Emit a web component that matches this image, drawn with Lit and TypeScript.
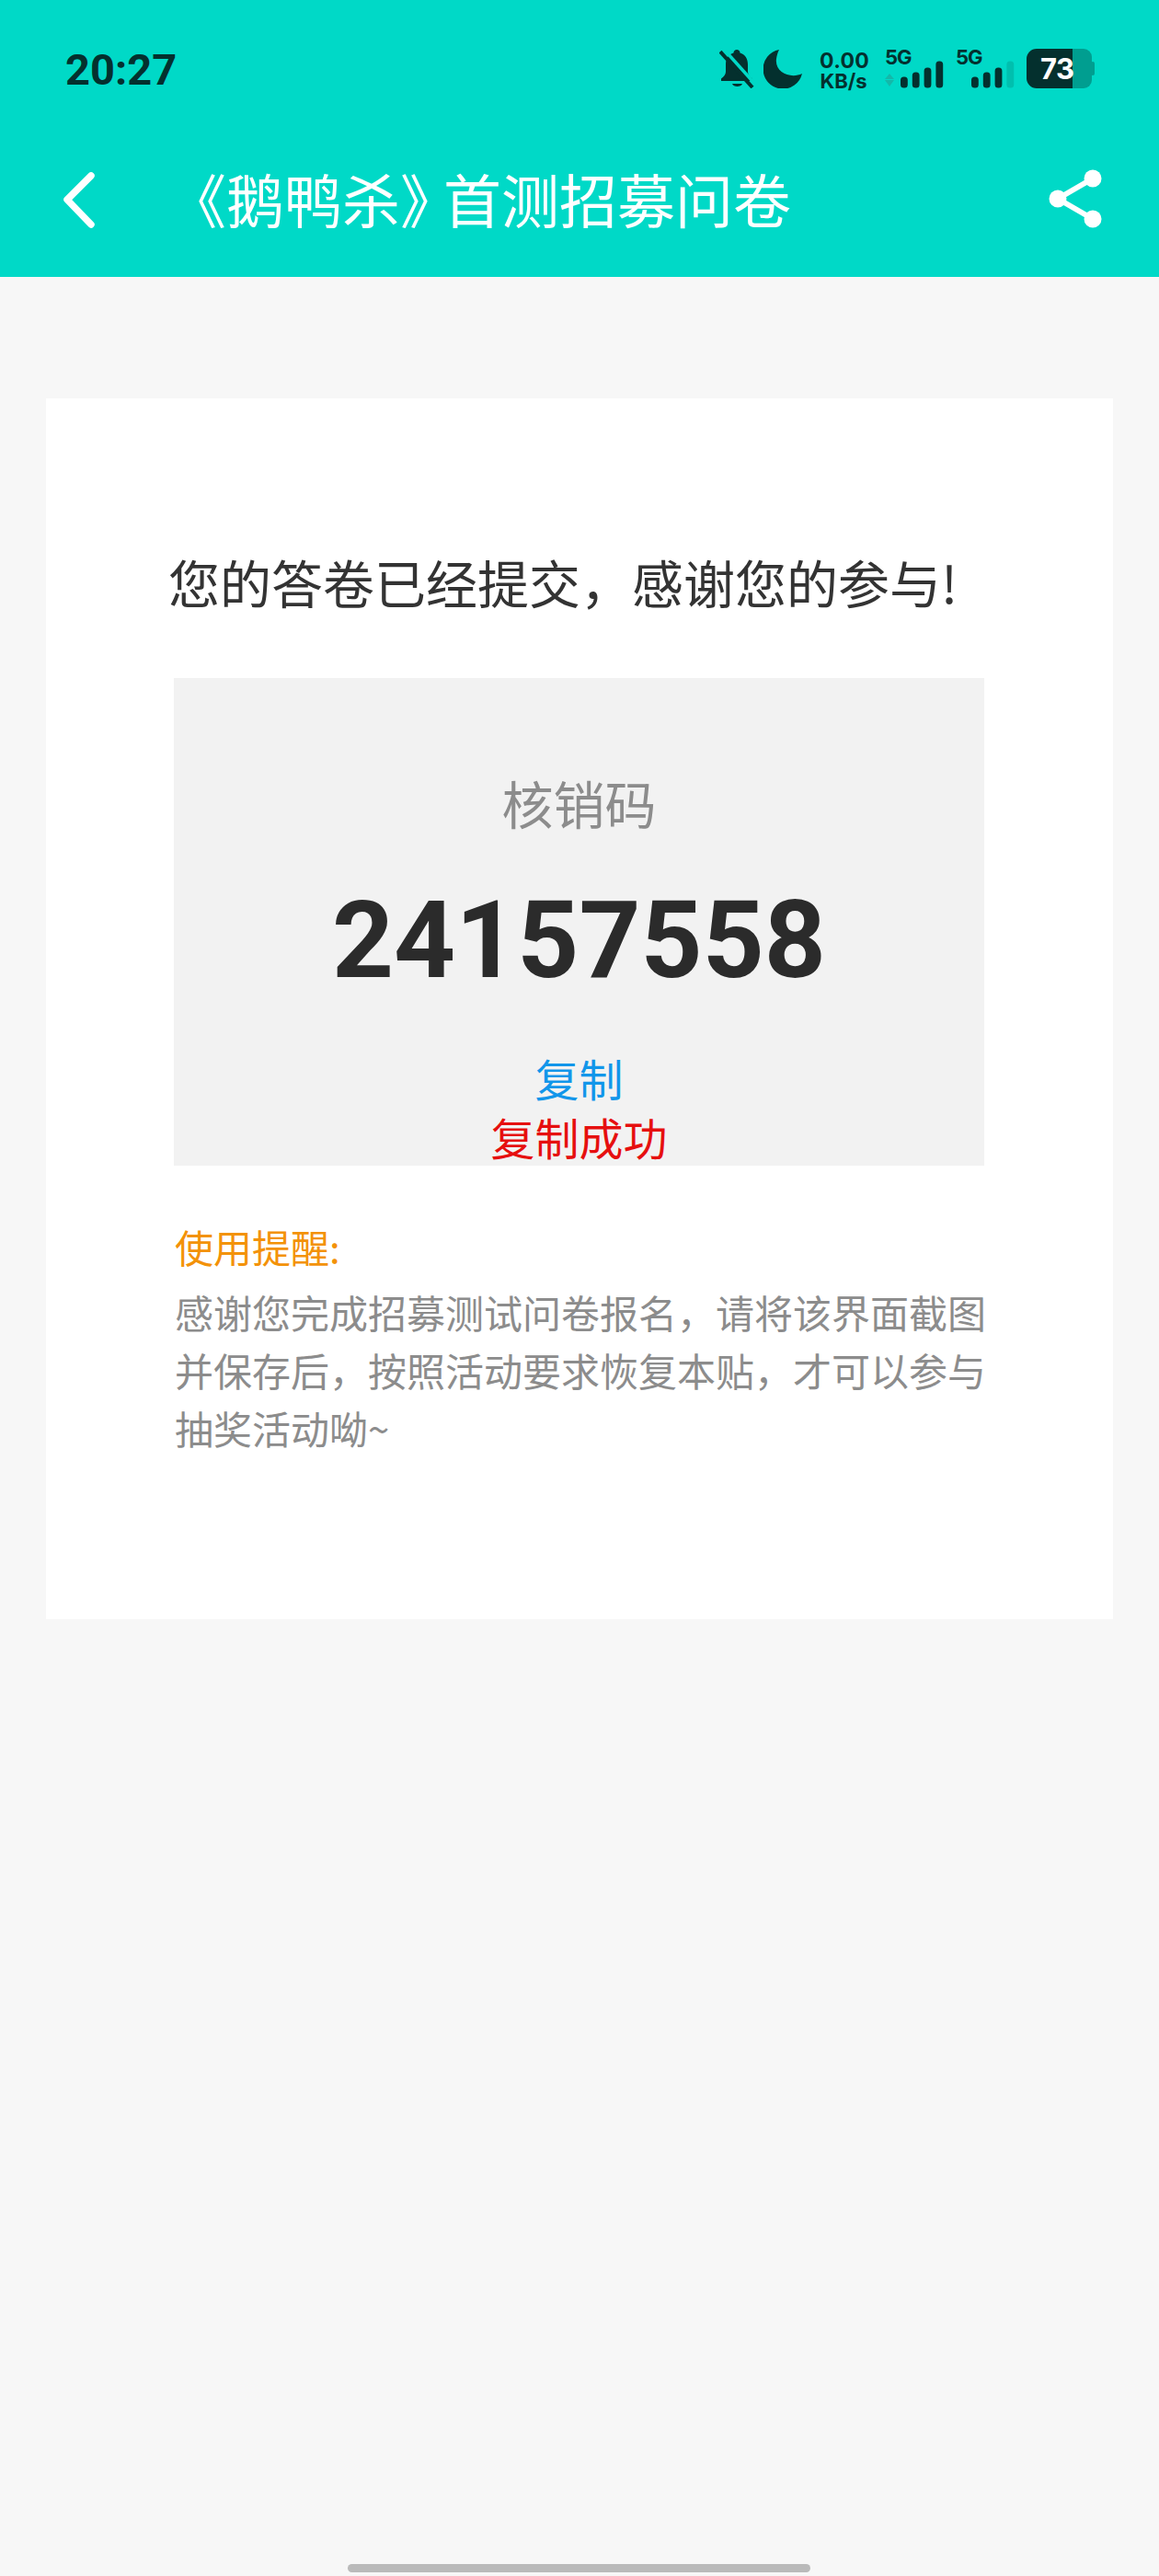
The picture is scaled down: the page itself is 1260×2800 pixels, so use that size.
import { LitElement, html, svg, css } from 'lit';
import { customElement } from 'lit/decorators.js';

const signal = (arrows: boolean) => html`
  <svg class="bars" width="70" height="30" viewBox="0 0 70 30">
    ${arrows ? svg`<path d="M5 14l5 6H0zM5 28l5-7H0z" fill="#14b8a9" />` : ''}
    ${[12, 17, 22, 29].map(
      (h, i) => svg`<rect
        x=${17 + i * 12.8}
        y=${29.5 - h}
        width="7.8"
        height=${h}
        rx="3.5"
        fill=${i === 3 && !arrows ? '#00bfae' : '#04302e'}
      />`
    )}
  </svg>
`;

@customElement('app-root')
export class AppRoot extends LitElement {
  static styles = css`
    :host {
      display: block;
      width: 1260px;
      height: 2800px;
      background: #f7f7f7;
      font-family: 'Noto Sans CJK SC', 'Noto Sans', sans-serif;
      position: relative;
      overflow: hidden;
    }
    .header {
      height: 301px;
      background: #00d9c7;
      box-sizing: border-box;
    }
    .status {
      height: 150px;
      display: flex;
      align-items: flex-start;
      justify-content: space-between;
      padding: 53px 70px 0 71px;
      box-sizing: border-box;
      color: #04302e;
    }
    .time {
      font-family: Roboto, sans-serif;
      font-weight: 700;
      font-size: 47px;
      line-height: 44px;
      margin-top: 1px;
    }
    .icons {
      display: flex;
      align-items: flex-start;
    }
    .bell {
      margin-right: 9px;
    }
    .moon {
      margin-right: 19px;
    }
    .speed {
      width: 52px;
      margin-right: 19px;
      text-align: center;
      font-family: Inter, sans-serif;
      font-weight: 700;
    }
    .speed .num {
      font-size: 23px;
      line-height: 24px;
      margin-top: 1px;
      letter-spacing: 0.3px;
    }
    .speed .unit {
      font-size: 22px;
      line-height: 20px;
      white-space: nowrap;
    }
    .sim {
      width: 70px;
      margin-right: 7px;
      height: 43px;
    }
    .sim span {
      display: block;
      font-family: Inter, sans-serif;
      font-weight: 700;
      font-size: 22px;
      line-height: 18px;
      height: 13px;
      letter-spacing: -1px;
    }
    .sim .bars {
      display: block;
    }
    .battery {
      position: relative;
      width: 74px;
      height: 43px;
    }
    .battery svg {
      display: block;
    }
    .battery b {
      position: absolute;
      left: 15px;
      top: 0;
      font-family: Inter, sans-serif;
      font-size: 31px;
      line-height: 43px;
      color: #fff;
      font-weight: 700;
      letter-spacing: -0.5px;
    }
    .nav {
      height: 151px;
      display: flex;
      align-items: flex-start;
      color: #fff;
      padding-left: 66px;
    }
    .back {
      margin-top: 34px;
      display: block;
    }
    .title {
      margin-left: 77px;
      margin-top: 25px;
      font-size: 63px;
      line-height: 80px;
      font-weight: 400;
      white-space: nowrap;
    }
    .title span {
      letter-spacing: -16px;
    }
    .share {
      margin-left: auto;
      margin-right: 62px;
      margin-top: 34px;
      display: block;
    }
    .card {
      margin: 132px 50px 0;
      background: #fff;
      padding: 164px 140px 177px 139px;
    }
    .done {
      margin: 0 0 0 -6px;
      font-size: 56px;
      line-height: 70px;
      font-weight: 400;
      color: #333;
      white-space: nowrap;
    }
    .box {
      margin-top: 70px;
      height: 530px;
      box-sizing: border-box;
      background: #f2f2f2;
      padding-top: 100px;
      text-align: center;
    }
    .label {
      font-size: 56px;
      line-height: 70px;
      color: #8c8c8c;
    }
    .code {
      margin-top: 45px;
      font-family: Roboto, sans-serif;
      font-weight: 700;
      font-size: 117px;
      line-height: 140px;
      color: #2b2b2b;
    }
    .copy {
      margin-top: 47px;
      font-size: 48px;
      line-height: 64px;
      color: #1296ea;
    }
    .copied {
      font-size: 48px;
      line-height: 64px;
      color: #e60f0f;
    }
    .tip {
      margin: 56px -10px 0 0;
      padding-left: 1px;
      font-size: 42px;
      line-height: 63px;
    }
    .tip-title {
      color: #f39208;
      margin-bottom: 8px;
    }
    .tip-body {
      color: #8c8c8c;
      margin: 0;
    }
    .home {
      position: absolute;
      left: 378px;
      top: 2787px;
      width: 503px;
      height: 9px;
      border-radius: 5px;
      background: #bababa;
    }
  `;

  render() {
    return html`
      <div class="header">
        <div class="status">
          <div class="time">20:27</div>
          <div class="icons">
            <svg class="bell" width="39" height="43" viewBox="0 0 39 43">
              <path
                d="M19 1c-2 0-3.500 1.500-3.500 3.500C10 6 7 11 7 17v8c0 3-2 5-5 7.500V35h34v-2.500c-3-2.500-5-4.500-5-7.500v-8c0-6-3-11-8.500-12.500C22.500 2.500 21 1 19 1zM14 38h11c-1 4-10 4-11 0z"
                fill="#04302e"
              />
              <path d="M4.500 0l35 39" stroke="#00d9c7" stroke-width="3.500" />
              <path d="M1 3l35 39" stroke="#04302e" stroke-width="4" />
            </svg>
            <svg class="moon" width="42" height="43" viewBox="0 0 42 43">
              <path
                d="M17 1A21.500 21.500 0 1 0 42 27C30 33 12 26 14 11C14.500 7 15.500 4 17 1z"
                fill="#04302e"
              />
            </svg>
            <div class="speed">
              <div class="num">0.00</div>
              <div class="unit">KB/s</div>
            </div>
            <div class="sim">
              <span>5G</span>
              ${signal(true)}
            </div>
            <div class="sim">
              <span>5G</span>
              ${signal(false)}
            </div>
            <div class="battery">
              <svg width="74" height="43" viewBox="0 0 74 43">
                <path d="M50 0h12a9 9 0 0 1 9 9v25a9 9 0 0 1-9 9H50z" fill="#009e90" />
                <rect x="70" y="14" width="4" height="15" rx="2" fill="#009e90" />
                <path d="M50 0H11A11 11 0 0 0 0 11v21a11 11 0 0 0 11 11h39z" fill="#04302e" />
              </svg>
              <b>73</b>
            </div>
          </div>
        </div>
        <div class="nav">
          <svg class="back" width="40" height="64" viewBox="0 0 40 64">
            <path
              d="M33 7L7 33l26 27"
              fill="none"
              stroke="#fff"
              stroke-width="7.500"
              stroke-linecap="round"
              stroke-linejoin="round"
            />
          </svg>
          <div class="title">《鹅鸭杀<span>》</span>首测招募问卷</div>
          <svg class="share" width="58" height="64" viewBox="0 0 58 64">
            <path d="M10 32L48 10M10 32l38 22" stroke="#fff" stroke-width="6" fill="none" />
            <circle cx="10" cy="32" r="9.500" fill="#fff" />
            <circle cx="48" cy="10" r="9.500" fill="#fff" />
            <circle cx="48" cy="54" r="9.500" fill="#fff" />
          </svg>
        </div>
      </div>
      <div class="card">
        <h1 class="done">您的答卷已经提交，感谢您的参与!</h1>
        <div class="box">
          <div class="label">核销码</div>
          <div class="code">24157558</div>
          <div class="copy">复制</div>
          <div class="copied">复制成功</div>
        </div>
        <div class="tip">
          <div class="tip-title">使用提醒:</div>
          <p class="tip-body">
            感谢您完成招募测试问卷报名，请将该界面截图并保存后，按照活动要求恢复本贴，才可以参与抽奖活动呦~
          </p>
        </div>
      </div>
      <div class="home"></div>
    `;
  }
}
